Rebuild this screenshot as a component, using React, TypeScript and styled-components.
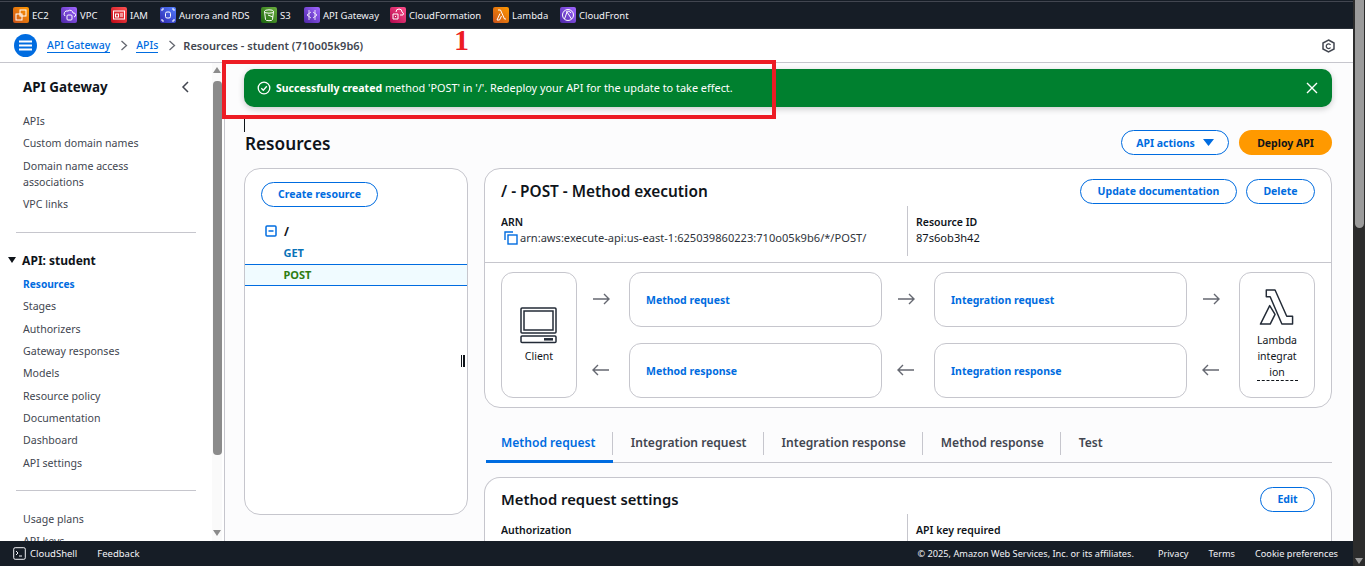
import React from "react";
import styled, { createGlobalStyle } from "styled-components";

const Global = createGlobalStyle`
  html, body { margin: 0; padding: 0; height: 566px; overflow: hidden; background: #fff; }
  * { box-sizing: border-box; }
  body { font-family: "Noto Sans", "Open Sans", sans-serif; color: #0f141a; }
`;
const Frame = styled.div`position: relative; display: flex; width: 1365px; height: 566px; overflow: hidden;`;
const Page = styled.div`flex: 0 0 1353px; display: flex; flex-direction: column; min-width: 0;`;
const PageScroll = styled.div`flex: 0 0 12px; background: #2c2c2c; display: flex; flex-direction: column; justify-content: space-between; align-items: center; padding-bottom: 2px;`;
const PageThumb = styled.div`width: 9px; height: 228px; background: #9b9b9b; border-radius: 0 0 5px 5px;`;
const Tri = styled.div<{ $up?: boolean; $c?: string }>`
  width: 0; height: 0; border-left: 4px solid transparent; border-right: 4px solid transparent;
  ${p => p.$up ? `border-bottom: 6px solid ${p.$c ?? "#9b9b9b"};` : `border-top: 6px solid ${p.$c ?? "#9b9b9b"};`}
`;
const TopBar = styled.div`
  flex: 0 0 29px; background: #161d26; border-top: 1px solid #161d26; box-shadow: inset 0 1px 0 #424650;
  border-bottom: 1px solid #2a3038;
  display: flex; align-items: center; padding: 1px 0 0 13px;
`;
const Service = styled.div<{ $w: number }>`flex: 0 0 ${p => p.$w}px; display: flex; align-items: center; gap: 3px; color: #f3f3f7; font-size: 9.5px; white-space: nowrap;`;
const Badge = styled.span<{ $a: string; $b: string }>`
  flex: 0 0 16px; height: 16px; border-radius: 2px; background: linear-gradient(45deg, ${p => p.$a}, ${p => p.$b});
  display: inline-flex; align-items: center; justify-content: center;
`;
const Crumbs = styled.div`
  flex: 0 0 34px; background: #fff; border-bottom: 1px solid #c6c6cd; display: flex; align-items: center;
  padding: 0 18px 0 14px; font-size: 10.5px; font-weight: 500;
`;
const MenuBtn = styled.span`width: 23px; height: 23px; border-radius: 50%; background: #006ce0; display: flex; align-items: center; justify-content: center; margin-right: 10px;`;
const Crumb = styled.a`color: #006ce0; border-bottom: 1px solid #006ce0; line-height: 13px;`;
const CrumbNow = styled.span`color: #424650; font-weight: 600; font-size: 11px; margin-left: -1px;`;
const CrumbSep = styled.span`display: flex; margin: 0 7.5px;`;
const Spacer = styled.span`flex: 1;`;
const Body = styled.div`flex: 1; display: flex; min-height: 0;`;
const Side = styled.nav`flex: 0 0 212px; background: #fff; padding: 16px 16px 0 0; overflow: hidden;`;
const SideHead = styled.div`display: flex; justify-content: space-between; align-items: center; padding: 0 6px 0 23px; height: 16px; font-size: 13.4px; font-weight: 700; margin-bottom: 15px;`;
const SideLink = styled.div<{ $active?: boolean }>`
  padding: 3px 16px 3.3px 23px; font-size: ${p => p.$active ? "10.2px" : "10.6px"}; line-height: 16px;
  color: ${p => p.$active ? "#006ce0" : "#424650"}; font-weight: ${p => p.$active ? 700 : 400};
`;
const Rule = styled.hr<{ $t: number; $b: number }>`border: 0; border-top: 1px solid #c6c6cd; margin: ${p => p.$t}px 0 ${p => p.$b}px 16px;`;
const SideGroup = styled.div`display: flex; align-items: center; gap: 3px; padding: 0 0 0 8px; font-size: 12px; font-weight: 700; height: 18px; margin-bottom: 4px;`;
const SideScroll = styled.div`flex: 0 0 10px; background: #fafafa; display: flex; flex-direction: column; align-items: center; padding: 4px 0 5px;`;
const SideThumb = styled.div`width: 9px; height: 374px; margin: 8px 0 auto; background: #8b8b8b; border-radius: 4px;`;
const Divider = styled.div`flex: 0 0 3px; background: #fff; border-right: 1px solid #c6c6cd;`;
const Main = styled.main`flex: 1; background: #fcfcfd; padding: 6px 21px 0 19px; overflow: hidden; min-width: 0;`;
const Flash = styled.div`
  height: 38px; border-radius: 10px; background: #00802f; color: #fff; display: flex; align-items: center;
  padding: 0 14px 0 13px; font-size: 10.9px; box-shadow: 0 2px 6px rgba(0,0,0,.2); gap: 5px;
  strong { font-weight: 700; font-size: 10.5px; }
`;
const FlashText = styled.span`margin-top: -1px;`;
const Caret = styled.div`width: 1px; height: 13px; background: #0f141a; margin-top: 12px;`;
const HeadRow = styled.div`display: flex; align-items: center; justify-content: space-between; height: 25px; margin: -2px 0 0;`;
const H1 = styled.h1`margin: 0 0 0 1px; font-size: 17.2px; font-weight: 600; line-height: 25px; position: relative; top: 1px;`;
const Btns = styled.div<{ $gap: number }>`display: flex; gap: ${p => p.$gap}px;`;
const Btn = styled.button<{ $primary?: boolean; $w: number }>`
  width: ${p => p.$w}px; height: 24.5px; border-radius: 13px; font: 700 10.5px "Noto Sans", sans-serif; padding: 0;
  display: flex; align-items: center; justify-content: center; gap: 8px;
  background: ${p => p.$primary ? "#ff9900" : "#fff"}; color: ${p => p.$primary ? "#0f141a" : "#006ce0"};
  border: ${p => p.$primary ? "0" : "1px solid #006ce0"};
`;
const Columns = styled.div`display: grid; grid-template-columns: 224px 848px; column-gap: 16px; margin-top: 13px; align-items: start;`;
const TreePanel = styled.section`position: relative; height: 347px; background: #fff; border: 1px solid #c6c6cd; border-radius: 16px; padding: 13px 0 0;`;
const TreeBtnRow = styled.div`padding-left: 16px; margin-bottom: 14px;`;
const TreeRoot = styled.div`display: flex; align-items: center; height: 21px; padding-left: 20px; gap: 7px; font-size: 12px; font-weight: 700;`;
const Method = styled.div<{ $selected?: boolean }>`
  height: 22px; padding-left: 38.500px; display: flex; align-items: center; font-size: 11px; font-weight: 700;
  color: ${p => p.$selected ? "#2e7d12" : "#0a73b8"}; background: ${p => p.$selected ? "#f0fbff" : "transparent"};
  border-top: 1px solid ${p => p.$selected ? "#006ce0" : "transparent"}; border-bottom: 1px solid ${p => p.$selected ? "#006ce0" : "transparent"};
`;
const Resizer = styled.span`position: absolute; left: 216px; top: 186px; width: 4px; height: 12px; border-left: 1px solid #0f141a; border-right: 2px solid #0f141a;`;
const Stack = styled.div`display: flex; flex-direction: column;`;
const Card = styled.section`background: #fff; border: 1px solid #c6c6cd; border-radius: 16px;`;
const CardHead = styled.div<{ $top: number }>`display: flex; align-items: flex-start; justify-content: space-between; padding: ${p => p.$top}px 16px 2px;`;
const H2 = styled.h2<{ $size: number }>`margin: 0; font-size: ${p => p.$size}px; font-weight: 600; line-height: 25px;`;
const Split = styled.div<{ $h: number }>`display: grid; grid-template-columns: 406px 1fr; padding-left: 16px; height: ${p => p.$h}px;`;
const Cell = styled.div<{ $right?: boolean }>`
  ${p => p.$right ? "border-left: 1px solid #c6c6cd; padding-left: 8px;" : ""} font-size: 11.100px; line-height: 16px; padding-top: 8px; overflow: hidden;
`;
const Label = styled.div`font-weight: 600; font-size: 10.5px;`;
const Arn = styled.div`display: flex; align-items: center; gap: 2px; color: #2f343b; white-space: nowrap; margin-left: 3px;`;
const Diagram = styled.div`
  border-top: 1px solid #c6c6cd; margin-top: 6px; padding: 9px 16px;
  display: grid; grid-template-columns: 76px 52px 253px 52px 253px 52px 76px; grid-template-rows: 55px 16px 55px;
`;
const Endpoint = styled.div<{ $col: number; $gap: number }>`
  grid-column: ${p => p.$col}; grid-row: 1 / 4; border: 1px solid #c6c6cd; border-radius: 12px; gap: ${p => p.$gap}px;
  display: flex; flex-direction: column; align-items: center; justify-content: center; text-align: center;
  font-size: 10.5px; line-height: 16px; padding: 0 8px; color: #0f141a;
`;
const Under = styled.span`border-bottom: 1px dashed #0f141a; word-break: break-all; width: 41px; line-height: 16px; display: block; margin: 0 auto;`;
const Step = styled.div<{ $col: number; $row: number }>`
  grid-column: ${p => p.$col}; grid-row: ${p => p.$row}; border: 1px solid #c6c6cd; border-radius: 12px;
  display: flex; align-items: center; padding: 0 16px; color: #006ce0; font-size: 10.5px; font-weight: 700;
`;
const ArrowCell = styled.div<{ $col: number; $row: number }>`
  grid-column: ${p => p.$col}; grid-row: ${p => p.$row}; display: flex; align-items: center; justify-content: center; padding: 0 4px 2px 0;
`;
const Tabs = styled.div`display: flex; height: 38px; margin-top: 17px; align-items: stretch; position: relative; border-bottom: 1px solid #c6c6cd; margin-left: 8px;`;
const Tab = styled.div<{ $active?: boolean }>`
  display: flex; align-items: center; font-size: 12.1px; font-weight: 600; margin-left: ${p => p.$active ? "-6px" : "0"};
  padding: ${p => p.$active ? "0 17.500px 1px 15px" : "0 17.200px 1px 17.800px"}; position: relative; color: ${p => p.$active ? "#006ce0" : "#424650"};
  border-bottom: 3px solid ${p => p.$active ? "#006ce0" : "transparent"}; margin-bottom: -1px;
  &:not(:last-child)::after { content: ""; position: absolute; right: 0; top: 7px; height: 23px; width: 1px; background: #c6c6cd; }
`;
const SettingsCard = styled(Card)`margin-top: 14px; height: 90px; border-bottom: 0; border-radius: 16px 16px 0 0;`;
const Footer = styled.footer`
  flex: 0 0 25px; background: #161d26; color: #f3f3f7; display: flex; align-items: center; padding: 0 15px 0 13px; font-size: 9.5px; white-space: nowrap;
`;
const FootLeft = styled.span<{ $m: number }>`margin-left: ${p => p.$m}px;`;
const FootRight = styled.span`font-size: 9.2px;`;
const Red = styled.div`position: absolute; left: 222px; top: 60px; width: 554px; height: 59px; border: 4px solid #ed1c24; pointer-events: none;`;
const One = styled.div`position: absolute; left: 454px; top: 23px; color: #ed1c24; font: 700 30px/34px "Liberation Serif", serif;`;

const s = { fill: "none", stroke: "#fff", strokeWidth: 1 } as const;
const services: [string, number, string, string, React.ReactNode][] = [
  ["EC2", 48, "#c8511b", "#ff9900", <g {...s}><rect x="7" y="3" width="6" height="6" /><rect x="3" y="7" width="6" height="6" /></g>],
  ["VPC", 50, "#4d27a8", "#a166ff", <g {...s}><path d="M4 9a3 3 0 0 1 3-5 3 3 0 0 1 5 2 2 2 0 0 1 1 4" /><rect x="6" y="8" width="5" height="5" rx="1" /></g>],
  ["IAM", 49, "#bd0816", "#ff5252", <g {...s}><rect x="2.500" y="4" width="11" height="8" /><rect x="4.500" y="7" width="3" height="3" /><path d="M9 7h3M9 9h3" /></g>],
  ["Aurora and RDS", 101, "#2e27ad", "#527fff", <g {...s}><rect x="5.500" y="5" width="5" height="6" rx="1.500" /><path d="M2 2h2M12 2h2M2 14h2M12 14h2M2 2v2M14 2v2M2 14v-2M14 14v-2" /></g>],
  ["S3", 43, "#1b660f", "#6cae3e", <g {...s}><ellipse cx="8" cy="4.500" rx="4.500" ry="1.700" /><path d="M3.500 4.500l1 8a3.500 1.200 0 0 0 7 0l1-8M7 8l5 2" /></g>],
  ["API Gateway", 86, "#4d27a8", "#a166ff", <g {...s}><path d="M5 3v10M11 3v10M7 5L3 8l4 3M9 5l4 3-4 3" strokeWidth=".8" /></g>],
  ["CloudFormation", 103, "#b0084d", "#ff4f8b", <g {...s}><path d="M3 7V12h5V7zM6 5a3 3 0 0 1 6 0 2 2 0 0 1 1 3h-3M5 9.500h1" /></g>],
  ["Lambda", 67, "#c8511b", "#ff9900", <g {...s}><path d="M5 3h2.500l4 9H13M7 6.500L4 13h2.500l2-4" /></g>],
  ["CloudFront", 70, "#4d27a8", "#a166ff", <g {...s}><circle cx="8" cy="8" r="5.500" /><path d="M4.500 12L7 5l2 3 2.500 4M6 5c2-1.500 4-.5 5 1" /></g>],
];
const Chevron = () => (
  <svg width="11" height="11" viewBox="0 0 11 11"><path d="M3.500 1l5 4.500-5 4.500" fill="none" stroke="#656871" strokeWidth="1.300" /></svg>
);
const Arrow = ({ left }: { left?: boolean }) => (
  <svg width="18" height="12" viewBox="0 0 18 12" fill="none" stroke="#656871" strokeWidth="1.400">
    {left ? <path d="M17 6H1M6 1L1 6l5 5" /> : <path d="M1 6h16M12 1l5 5-5 5" />}
  </svg>
);
const nav1 = ["Stages", "Authorizers", "Gateway responses", "Models", "Resource policy", "Documentation", "Dashboard", "API settings"];

export default function App() {
  return (
    <Frame>
      <Global />
      <Page>
        <TopBar>
          {services.map(([name, w, a, b, g]) => (
            <Service key={name} $w={w}>
              <Badge $a={a} $b={b}><svg width="16" height="16" viewBox="0 0 16 16">{g}</svg></Badge>
              {name}
            </Service>
          ))}
        </TopBar>
        <Crumbs>
          <MenuBtn>
            <svg width="13" height="11" viewBox="0 0 13 11"><path d="M0 1.500h13M0 5.500h13M0 9.500h13" stroke="#fff" strokeWidth="1.800" /></svg>
          </MenuBtn>
          <Crumb>API Gateway</Crumb>
          <CrumbSep><Chevron /></CrumbSep>
          <Crumb>APIs</Crumb>
          <CrumbSep><Chevron /></CrumbSep>
          <CrumbNow>Resources - student (710o05k9b6)</CrumbNow>
          <Spacer />
          <svg width="13" height="14" viewBox="0 0 13 14" fill="none" stroke="#424650">
            <path d="M6.500 1L12 4v6l-5.500 3L1 10V4z" strokeWidth="1.500" />
            <path d="M8.500 6a2.300 2.300 0 1 0 0 2.500" strokeWidth="1.300" />
          </svg>
        </Crumbs>
        <Body>
          <Side>
            <SideHead>
              API Gateway
              <svg width="10" height="12" viewBox="0 0 10 12"><path d="M8 1L3 6l5 5" fill="none" stroke="#424650" strokeWidth="1.500" /></svg>
            </SideHead>
            <SideLink>APIs</SideLink>
            <SideLink>Custom domain names</SideLink>
            <SideLink>Domain name access associations</SideLink>
            <SideLink>VPC links</SideLink>
            <Rule $t={17} $b={18} />
            <SideGroup><Tri $c="#0f141a" />&nbsp;API: student</SideGroup>
            <SideLink $active>Resources</SideLink>
            {nav1.map(n => <SideLink key={n}>{n}</SideLink>)}
            <Rule $t={16} $b={17} />
            <SideLink>Usage plans</SideLink>
            <SideLink>API keys</SideLink>
          </Side>
          <SideScroll>
            <Tri $up $c="#8b8b8b" />
            <SideThumb />
            <Tri $c="#8b8b8b" />
          </SideScroll>
          <Divider />
          <Main>
            <Flash>
              <svg width="14" height="14" viewBox="0 0 14 14" fill="none" stroke="#fff" strokeWidth="1.300"><circle cx="7" cy="7" r="5.800" /><path d="M4.300 7.200l2 2 3.500-4" /></svg>
              <FlashText><strong>Successfully created</strong> method 'POST' in '/'. Redeploy your API for the update to take effect.</FlashText>
              <Spacer />
              <svg width="12" height="12" viewBox="0 0 12 12"><path d="M1 1l10 10M11 1L1 11" stroke="#fff" strokeWidth="1.400" /></svg>
            </Flash>
            <Caret />
            <HeadRow>
              <H1>Resources</H1>
              <Btns $gap={10}>
                <Btn $w={108}>API actions
                  <svg width="11" height="8" viewBox="0 0 11 8"><path d="M0 0h11L5.500 7z" fill="#006ce0" /></svg>
                </Btn>
                <Btn $primary $w={93}>Deploy API</Btn>
              </Btns>
            </HeadRow>
            <Columns>
              <TreePanel>
                <TreeBtnRow><Btn $w={117}>Create resource</Btn></TreeBtnRow>
                <TreeRoot>
                  <svg width="12" height="12" viewBox="0 0 12 12" fill="none" stroke="#006ce0" strokeWidth="1.500"><rect x="1" y="1" width="10" height="10" rx="1" /><path d="M3.500 6h5" /></svg>
                  /
                </TreeRoot>
                <Method>GET</Method>
                <Method $selected>POST</Method>
                <Resizer />
              </TreePanel>
              <Stack>
                <Card>
                  <CardHead $top={10}>
                    <H2 $size={15.4}>/ - POST - Method execution</H2>
                    <Btns $gap={9}>
                      <Btn $w={157}>Update documentation</Btn>
                      <Btn $w={69}>Delete</Btn>
                    </Btns>
                  </CardHead>
                  <Split $h={50}>
                    <Cell>
                      <Label>ARN</Label>
                      <Arn>
                        <svg width="14" height="14" viewBox="0 0 14 14" fill="none" stroke="#006ce0" strokeWidth="1.400"><path d="M1 9V1h8" /><rect x="4" y="4" width="9" height="9" /></svg>
                        arn:aws:execute-api:us-east-1:625039860223:710o05k9b6/*/POST/
                      </Arn>
                    </Cell>
                    <Cell $right><Label>Resource ID</Label>87s6ob3h42</Cell>
                  </Split>
                  <Diagram>
                    <Endpoint $col={1} $gap={4}>
                      <svg width="38" height="37" viewBox="0 0 38 37" fill="none" stroke="#232b37" strokeWidth="1.500">
                        <rect x="1" y="1" width="35" height="25" rx="1" />
                        <rect x="4" y="4" width="29" height="19" />
                        <rect x="1" y="29" width="35" height="6.500" rx="1" />
                        <path d="M24 32.300h9" strokeWidth="2.500" />
                      </svg>
                      Client
                    </Endpoint>
                    <ArrowCell $col={2} $row={1}><Arrow /></ArrowCell>
                    <ArrowCell $col={2} $row={3}><Arrow left /></ArrowCell>
                    <Step $col={3} $row={1}>Method request</Step>
                    <Step $col={3} $row={3}>Method response</Step>
                    <ArrowCell $col={4} $row={1}><Arrow /></ArrowCell>
                    <ArrowCell $col={4} $row={3}><Arrow left /></ArrowCell>
                    <Step $col={5} $row={1}>Integration request</Step>
                    <Step $col={5} $row={3}>Integration response</Step>
                    <ArrowCell $col={6} $row={1}><Arrow /></ArrowCell>
                    <ArrowCell $col={6} $row={3}><Arrow left /></ArrowCell>
                    <Endpoint $col={7} $gap={6}>
                      <svg width="36" height="37" viewBox="0 0 36 38" fill="none" stroke="#232b37" strokeWidth="1.500" strokeLinejoin="round">
                        <path d="M7 1h9l12 27 6 0v8H23L11 8H7z" />
                        <path d="M10.500 17L1 36h10l5-10z" />
                      </svg>
                      <div>
                        Lambda
                        <Under>integration</Under>
                      </div>
                    </Endpoint>
                  </Diagram>
                </Card>
                <Tabs>
                  <Tab $active>Method request</Tab>
                  <Tab>Integration request</Tab>
                  <Tab>Integration response</Tab>
                  <Tab>Method response</Tab>
                  <Tab>Test</Tab>
                </Tabs>
                <SettingsCard>
                  <CardHead $top={9}>
                    <H2 $size={14.8}>Method request settings</H2>
                    <Btn $w={55}>Edit</Btn>
                  </CardHead>
                  <Split $h={40}>
                    <Cell><Label>Authorization</Label></Cell>
                    <Cell $right><Label>API key required</Label></Cell>
                  </Split>
                </SettingsCard>
              </Stack>
            </Columns>
          </Main>
        </Body>
        <Footer>
          <svg width="13" height="13" viewBox="0 0 13 13" fill="none" stroke="#f3f3f7"><rect x=".7" y=".7" width="11.600" height="11.600" rx="1.500" /><path d="M3 4l2 2-2 2M6 9h3" /></svg>
          <FootLeft $m={4}>CloudShell</FootLeft>
          <FootLeft $m={20}>Feedback</FootLeft>
          <Spacer />
          <FootRight>© 2025, Amazon Web Services, Inc. or its affiliates.</FootRight>
          <FootLeft $m={24}><FootRight>Privacy</FootRight></FootLeft>
          <FootLeft $m={20}><FootRight>Terms</FootRight></FootLeft>
          <FootLeft $m={20}><FootRight>Cookie preferences</FootRight></FootLeft>
        </Footer>
      </Page>
      <PageScroll>
        <PageThumb />
        <Tri />
      </PageScroll>
      <Red />
      <One>1</One>
    </Frame>
  );
}
